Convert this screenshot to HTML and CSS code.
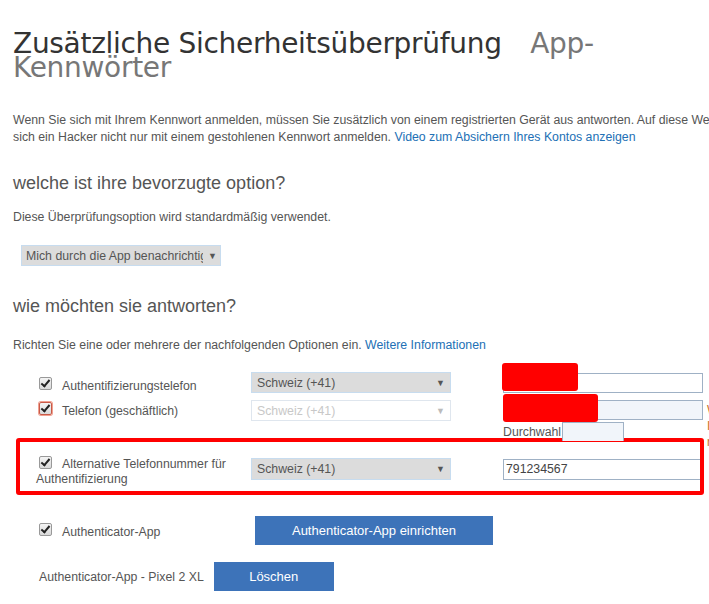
FILE: index.html
```html
<!DOCTYPE html>
<html lang="de">
<head>
    <meta charset="UTF-8">
    <title>Zusätzliche Sicherheitsüberprüfung</title>
    <link rel="stylesheet" href="styles.css">
</head>
<body>
    <div class="page">
        <h1 class="title">Zusätzliche Sicherheitsüberprüfung <span class="title-sub">App-Kennwörter</span></h1>

        <p class="intro">Wenn Sie sich mit Ihrem Kennwort anmelden, müssen Sie zusätzlich von einem registrierten Gerät aus antworten. Auf diese Weise kann sich ein Hacker nicht nur mit einem gestohlenen Kennwort anmelden. <a href="#">Video zum Absichern Ihres Kontos anzeigen</a></p>

        <h2 class="section-title">welche ist ihre bevorzugte option?</h2>
        <p class="note">Diese Überprüfungsoption wird standardmäßig verwendet.</p>
        <div class="select select-pref">
            <span class="select-text">Mich durch die App benachrichtigen</span>
            <span class="select-arrow">▼</span>
        </div>

        <h2 class="section-title second">wie möchten sie antworten?</h2>
        <p class="note note-options">Richten Sie eine oder mehrere der nachfolgenden Optionen ein. <a href="#">Weitere Informationen</a></p>

        <div class="options">
            <div class="option-row row-phone">
                <label class="option-label"><span class="check"></span>Authentifizierungstelefon</label>
                <div class="select">
                    <span class="select-text">Schweiz (+41)</span>
                    <span class="select-arrow">▼</span>
                </div>
                <div class="field">
                    <div class="phone-input"></div>
                    <div class="redact redact-one"></div>
                </div>
            </div>

            <div class="option-row row-office">
                <label class="option-label"><span class="check check-error"></span>Telefon (geschäftlich)</label>
                <div class="select select-disabled">
                    <span class="select-text">Schweiz (+41)</span>
                    <span class="select-arrow">▼</span>
                </div>
                <div class="field">
                    <div class="phone-input phone-input-office"></div>
                    <div class="redact redact-two"></div>
                </div>
                <div class="side-note">W<br>I<br>r</div>
            </div>

            <div class="extension-row">
                <span class="extension-label">Durchwahl</span>
                <div class="extension-input"></div>
            </div>

            <div class="highlight">
                <div class="option-row row-alt">
                    <label class="option-label"><span class="check"></span>Alternative Telefonnummer für Authentifizierung</label>
                    <div class="select">
                        <span class="select-text">Schweiz (+41)</span>
                        <span class="select-arrow">▼</span>
                    </div>
                    <div class="field">
                        <div class="phone-input">791234567</div>
                    </div>
                </div>
            </div>

            <div class="option-row row-app">
                <label class="option-label"><span class="check"></span>Authenticator-App</label>
                <button class="btn btn-setup">Authenticator-App einrichten</button>
            </div>

            <div class="device-row">
                <span class="device-name">Authenticator-App - Pixel 2 XL</span>
                <button class="btn btn-delete">Löschen</button>
            </div>
        </div>
    </div>
</body>
</html>
```

FILE: styles.css
```css
html, body {
    margin: 0;
    overflow: hidden;
}
body {
    font-family: "Liberation Sans", Arial, sans-serif;
    font-size: 12.3px;
    color: #555;
    background-color: white;
}
a {
    color: #2270b5;
    text-decoration: none;
}
.page {
    width: 900px;
    padding: 32px 0 0 13px;
}
.title {
    width: 600px;
    margin: 0;
    font-family: "DejaVu Sans", sans-serif;
    font-size: 28px;
    letter-spacing: -0.3px;
    font-weight: normal;
    line-height: 24px;
    color: #333;
}
.title-sub {
    padding-left: 20px;
    color: #777;
}
.intro {
    width: 750px;
    margin: 32px 0 0;
    line-height: 17px;
}
.section-title {
    margin: 26px 0 0;
    font-size: 18px;
    font-weight: normal;
    line-height: 22px;
    color: #555;
}
.section-title.second {
    margin-top: 29px;
}
.note {
    margin: 15px 0 0;
    line-height: 17px;
}
.note-options {
    margin-top: 20px;
}
.select {
    box-sizing: border-box;
    width: 200px;
    height: 21px;
    display: flex;
    align-items: center;
    padding: 0 5px;
    background-color: #dcdcdc;
    border: 1px solid #c7dcef;
    color: #555;
    font-size: 12.3px;
}
.select-pref {
    margin: 19px 0 0 8px;
    padding: 0 4px;
}
.select-text {
    flex: 1;
    overflow: hidden;
    white-space: nowrap;
}
.select-pref .select-text {
    flex: none;
    width: 177px;
}
.select-arrow {
    font-size: 9px;
    color: #555;
    padding-left: 4px;
}
.select-pref .select-arrow {
    padding-left: 5px;
}
.select-disabled {
    background-color: white;
    border-color: #dfe6ee;
    color: #c8c8c8;
}
.select-disabled .select-arrow {
    color: #bbb;
}
.options {
    margin-top: 18px;
}
.option-row {
    display: grid;
    grid-template-columns: 215px 252px 200px 10px;
    grid-template-rows: 100%;
    align-items: start;
    margin-left: 23px;
}
.row-phone {
    height: 28px;
}
.row-phone .option-label {
    margin-top: 5px;
}
.row-phone .phone-input {
    margin-top: 1px;
}
.row-office {
    height: 22px;
}
.row-office .option-label {
    margin-top: 2px;
}
.option-label {
    display: flex;
    align-items: baseline;
    height: 16px;
    line-height: 16px;
}
.check {
    box-sizing: border-box;
    width: 13px;
    height: 13px;
    margin: 0 10px 0 3px;
    flex: none;
    border: 1px solid #999;
    border-radius: 2px;
    background: linear-gradient(#f4f4f4, #d9d9d9);
    position: relative;
}
.check::after {
    content: "";
    position: absolute;
    left: 3px;
    top: 0px;
    width: 3px;
    height: 7px;
    border: solid #222;
    border-width: 0 2px 2px 0;
    transform: rotate(40deg);
}
.check-error {
    border-color: #c85a48;
    box-shadow: 0 0 0 1px #f1a090;
}
.field {
    position: relative;
}
.phone-input {
    box-sizing: border-box;
    width: 200px;
    height: 20px;
    border: 1px solid #9fb1c5;
    background-color: white;
    padding: 1px 2px;
    color: #444;
    line-height: 16px;
}
.phone-input-office {
    background-color: #f1f5fa;
}
.redact {
    position: absolute;
    background-color: #ff0000;
    border-radius: 3px;
}
.redact-one {
    left: -1px;
    top: -9px;
    width: 76px;
    height: 28px;
}
.redact-two {
    left: 0;
    top: -6px;
    width: 95px;
    height: 28px;
}
.side-note {
    height: 0;
    margin: 2px 0 0 4px;
    font-size: 12px;
    line-height: 16px;
    color: #c8702a;
}
.extension-row {
    display: flex;
    align-items: center;
    height: 19px;
    margin-left: 490px;
}
.extension-input {
    box-sizing: border-box;
    width: 62px;
    height: 19px;
    margin-left: 1px;
    border: 1px solid #9fb1c5;
    border-bottom: none;
    background-color: #f1f5fa;
}
.highlight {
    box-sizing: border-box;
    width: 688px;
    height: 57px;
    margin: -3px 0 0 3px;
    border: 4px solid #ff0000;
    border-radius: 3px;
    overflow: hidden;
    padding-top: 16px;
}
.row-alt {
    margin-left: 16px;
    height: 30px;
}
.row-alt .option-label {
    display: block;
    height: auto;
    margin-top: -2px;
    line-height: 15px;
}
.row-alt .check {
    display: inline-block;
    vertical-align: -1px;
    margin-right: 10px;
}
.row-alt .select {
    height: 22px;
}
.row-alt .phone-input {
    height: 21px;
    margin-top: 1px;
    line-height: 17px;
}
.row-app {
    margin-top: 21px;
    height: 29px;
    align-items: center;
}
.btn {
    font-family: "Liberation Sans", Arial, sans-serif;
    font-size: 13px;
    color: white;
    background-color: #3d73b9;
    border: none;
    height: 29px;
    padding: 0;
    cursor: pointer;
}
.btn-setup {
    width: 238px;
    margin-left: 4px;
    grid-column: span 2;
    justify-self: start;
}
.device-row {
    display: flex;
    align-items: center;
    gap: 10px;
    margin: 17px 0 0 26px;
}
.btn-delete {
    width: 120px;
}
```
